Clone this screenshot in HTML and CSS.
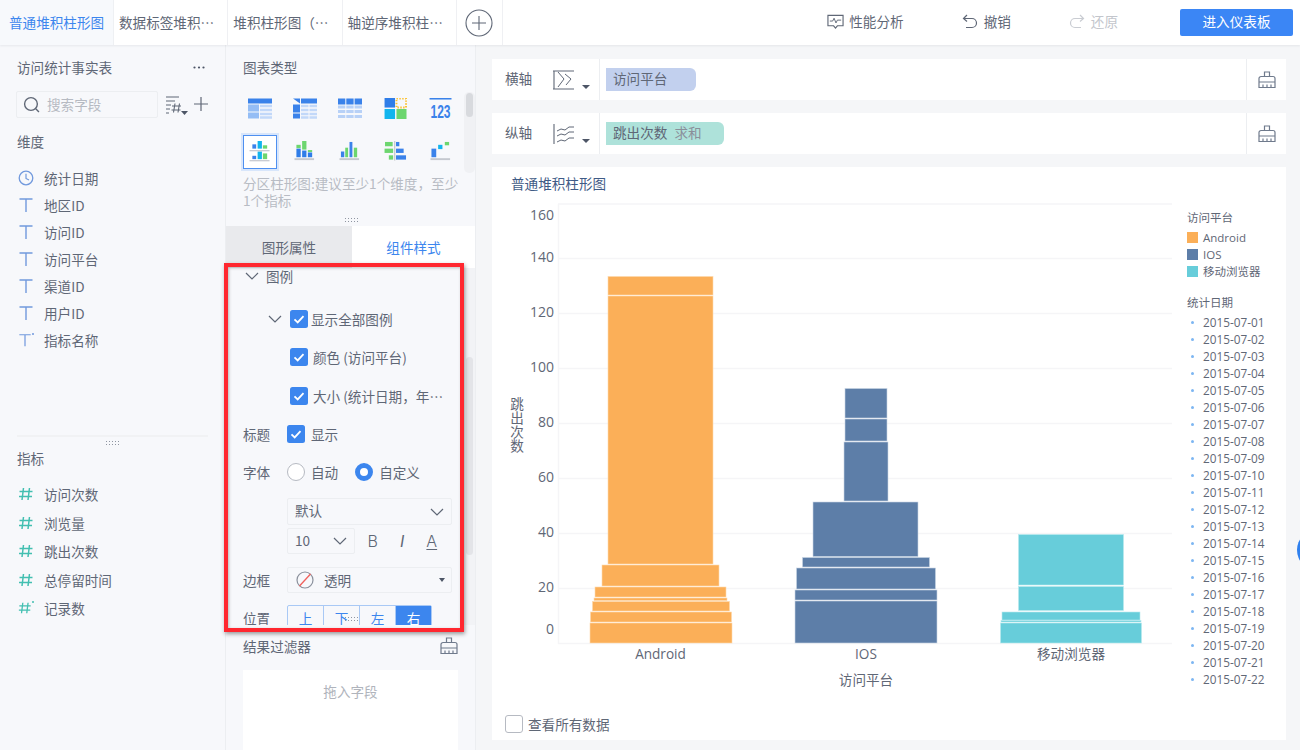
FILE: index.html
```html
<!DOCTYPE html>
<html lang="zh-CN">
<head>
<meta charset="utf-8">
<title>普通堆积柱形图</title>
<link rel="stylesheet" href="styles.css">
</head>
<body>
<svg class="sprite" aria-hidden="true">
  <symbol id="i-brush" viewBox="0 0 18 18"><path d="M6.500 1h5v4.500h-5zM3 5.500h12a2 2 0 0 1 2 2V11H1V7.500a2 2 0 0 1 2-2zM1 11h16v5.500H1zM5 13.500v3M9 13.500v3M13 13.500v3" fill="none" stroke="#6f7a8c" stroke-width="1.200"/></symbol>
  <symbol id="i-check" viewBox="0 0 18 18"><rect width="18" height="18" rx="2.500" fill="#3c86ee"/><path d="M4.500 9.300l3.200 3.100 5.800-6.300" fill="none" stroke="#fff" stroke-width="1.800"/></symbol>
  <symbol id="i-chev" viewBox="0 0 14 8"><path d="M1 1l6 6 6-6" fill="none" stroke="#5f6776" stroke-width="1.200"/></symbol>
  <symbol id="i-t" viewBox="0 0 16 16"><path d="M1.500 2h13M8 2v13" fill="none" stroke="#7199dd" stroke-width="1.400"/></symbol>
  <symbol id="i-hash" viewBox="0 0 16 16"><path d="M5.500 2L4 14M11.500 2L10 14M1.500 5.500h13M1 10.500h13" fill="none" stroke="#43bfb1" stroke-width="1.500"/></symbol>
</svg>

<header class="topbar">
  <nav class="tabs">
    <div class="tab tab-active">普通堆积柱形图</div>
    <div class="tab">数据标签堆积…</div>
    <div class="tab">堆积柱形图（…</div>
    <div class="tab">轴逆序堆积柱…</div>
    <div class="tab-add"><svg class="add-icon" viewBox="0 0 28 28"><circle cx="14" cy="14" r="13" fill="none" stroke="#5f6776" stroke-width="1.100"/><path d="M14 7v14M7 14h14" stroke="#5f6776" stroke-width="1.100"/></svg></div>
  </nav>
  <div class="actions">
    <div class="action action-perf"><svg class="action-icon" viewBox="0 0 18 16"><path d="M1 1h16v11h-6l-2 2.500L7 12H1z" fill="none" stroke="#5f6776" stroke-width="1.200"/><path d="M3 7h3l1.500-3 2 5 1.500-3h4" fill="none" stroke="#5f6776" stroke-width="1"/></svg>性能分析</div>
    <div class="action action-undo"><svg class="action-icon" viewBox="0 0 16 16"><path d="M5 1L1.500 4.500 5 7.500M2 4.500h8a4 4 0 0 1 0 9H4" fill="none" stroke="#5f6776" stroke-width="1.200"/></svg>撤销</div>
    <div class="action action-redo"><svg class="action-icon" viewBox="0 0 16 16"><path d="M11 1l3.500 3.500L11 7.500M14 4.500H6a4 4 0 0 0 0 9h6" fill="none" stroke="#c9ccd2" stroke-width="1.200"/></svg>还原</div>
    <button class="primary">进入仪表板</button>
  </div>
</header>

<main class="workspace">
  <aside class="fields">
    <div class="fields-head"><span>访问统计事实表</span><svg class="more" viewBox="0 0 12 3"><circle cx="1.500" cy="1.500" r="1.100"/><circle cx="6" cy="1.500" r="1.100"/><circle cx="10.500" cy="1.500" r="1.100"/></svg></div>
    <div class="search-row">
      <div class="search">
        <svg class="search-icon" viewBox="0 0 16 16"><circle cx="7.500" cy="7.500" r="6" fill="none" stroke="#5f6776" stroke-width="1.300"/><path d="M12 12l3 3" stroke="#5f6776" stroke-width="1.300"/></svg>
        <span>搜索字段</span>
      </div>
      <svg class="sort-icon" viewBox="0 0 23 20"><path d="M1 2h13M1 6h9M1 10h5M1 14h4M1 18h3" stroke="#5f6776" stroke-width="1.100"/><path d="M10 8.500l-1.500 9M14.500 8.500l-1.500 9M7 11h9M6.500 15h9" stroke="#5f6776" stroke-width="1.100" fill="none"/><path d="M16 16h7l-3.500 4z" fill="#4d5566"/></svg>
      <svg class="plus-icon" viewBox="0 0 14 14"><path d="M7 0v14M0 7h14" stroke="#5f6776" stroke-width="1.200"/></svg>
    </div>
    <h3 class="group-title">维度</h3>
    <ul class="field-list">
      <li><svg class="f-icon" viewBox="0 0 16 16"><circle cx="8" cy="8" r="6.800" fill="none" stroke="#7199dd" stroke-width="1.300"/><path d="M8 3.800V8.500l3 1.500" fill="none" stroke="#7199dd" stroke-width="1.200"/></svg>统计日期</li>
      <li><svg class="f-icon"><use href="#i-t"/></svg>地区ID</li>
      <li><svg class="f-icon"><use href="#i-t"/></svg>访问ID</li>
      <li><svg class="f-icon"><use href="#i-t"/></svg>访问平台</li>
      <li><svg class="f-icon"><use href="#i-t"/></svg>渠道ID</li>
      <li><svg class="f-icon"><use href="#i-t"/></svg>用户ID</li>
      <li><svg class="f-icon" viewBox="0 0 16 16"><use href="#i-t" width="14" height="16"/><circle cx="15" cy="2" r="1" fill="#7199dd"/></svg>指标名称</li>
    </ul>
    <div class="split"><span class="dots"></span></div>
    <h3 class="group-title group-measure">指标</h3>
    <ul class="field-list measure-list">
      <li><svg class="f-icon"><use href="#i-hash"/></svg>访问次数</li>
      <li><svg class="f-icon"><use href="#i-hash"/></svg>浏览量</li>
      <li><svg class="f-icon"><use href="#i-hash"/></svg>跳出次数</li>
      <li><svg class="f-icon"><use href="#i-hash"/></svg>总停留时间</li>
      <li><svg class="f-icon" viewBox="0 0 16 16"><use href="#i-hash" width="14" height="16"/><circle cx="15" cy="2" r="1" fill="#43bfb1"/></svg>记录数</li>
    </ul>
    <span class="dots dots-v"></span>
  </aside>

  <section class="config">
    <div class="types">
      <h3 class="types-title">图表类型</h3>
      <div class="type-grid">
        <div class="type"><svg viewBox="0 0 24 20"><rect width="24" height="5" fill="#3a82ea"/><rect y="6" width="11" height="7" fill="#94bdf5"/><rect y="14" width="11" height="6" fill="#94bdf5"/><path d="M12 7.500h12M12 11.500h12M12 15.500h12M12 19h12" stroke="#c2d8f9" stroke-width="2.500"/></svg></div>
        <div class="type"><svg viewBox="0 0 24 20"><path d="M0 0h7v5z" fill="#3a82ea"/><rect x="8" width="16" height="5" fill="#3a82ea"/><rect y="6" width="7" height="8" fill="#3a82ea"/><rect y="15" width="7" height="5" fill="#3a82ea"/><path d="M8 7.500h7.500M8 11.500h7.500M8 15.500h7.500M8 19h7.500M16.500 7.500H24M16.500 11.500H24M16.500 15.500H24M16.500 19H24" stroke="#c2d8f9" stroke-width="2.500"/></svg></div>
        <div class="type"><svg viewBox="0 0 24 20"><rect width="7.300" height="6" fill="#3a82ea"/><rect x="8.300" width="7.300" height="6" fill="#3a82ea"/><rect x="16.600" width="7.400" height="6" fill="#3a82ea"/><path d="M0 8.500h7.300M8.300 8.500h7.300M16.600 8.500H24M0 13h7.300M8.300 13h7.300M16.600 13H24M0 18h7.300M8.300 18h7.300M16.600 18H24" stroke="#b8d1f7" stroke-width="3"/></svg></div>
        <div class="type"><svg viewBox="0 0 24 22"><rect width="11" height="10" fill="#2f7de8"/><rect x="12.500" y=".5" width="10" height="9.500" fill="none" stroke="#fbc02d" stroke-width="2" stroke-dasharray="1.500 1.500"/><rect y="11.500" width="11" height="10.500" fill="#12b5ee"/><rect x="12.500" y="11.500" width="10.500" height="10.500" fill="#6dd66f"/></svg></div>
        <div class="type type-num"><svg viewBox="0 0 24 22"><rect width="23" height="1.600" fill="#3a82ea"/><text class="num-text" x="11.500" y="20.500" text-anchor="middle" textLength="21" lengthAdjust="spacingAndGlyphs">123</text></svg></div>

        <div class="type type-on"><svg viewBox="0 0 22 22"><g fill="#3a82ea"><rect x="3" y="3.500" width="4" height="4.500"/><rect x="3" y="15.500" width="4" height="3.500"/></g><g fill="#12b5ee"><rect x="8.500" y="0" width="4.500" height="8"/><rect x="8.500" y="11" width="4.500" height="8"/></g><g fill="#6dd66f"><rect x="14" y="4.500" width="4.500" height="3.500"/><rect x="14" y="13" width="4.500" height="6"/></g><rect y="9.500" width="21" height="1.300" fill="#c5c8cf"/><rect y="20" width="21" height="1.300" fill="#c5c8cf"/></svg></div>
        <div class="type"><svg viewBox="0 0 22 22"><rect x="2" y="4" width="4.500" height="3.500" fill="#6dd66f"/><rect x="2" y="8" width="4.500" height="9" fill="#2f7de8"/><rect x="8" y="0" width="4.500" height="9" fill="#6dd66f"/><rect x="8" y="10" width="4.500" height="7" fill="#2f7de8"/><rect x="14" y="9.500" width="4.500" height="2" fill="#6dd66f"/><rect x="14" y="12" width="4.500" height="5" fill="#2f7de8"/><rect y="18" width="20.500" height="2" fill="#c5c8cf"/></svg></div>
        <div class="type"><svg viewBox="0 0 22 22"><rect x="1.500" y="11" width="3.500" height="6" fill="#3a82ea"/><rect x="6" y="7" width="3" height="10" fill="#6dd66f"/><rect x="10.500" y="1" width="3" height="16" fill="#3a82ea"/><rect x="15" y="7" width="3.500" height="10" fill="#6dd66f"/><rect y="18" width="20.500" height="2" fill="#c5c8cf"/></svg></div>
        <div class="type"><svg viewBox="0 0 24 22"><rect x="0.500" y="1" width="8" height="4.500" fill="#6dd66f"/><rect y="8" width="9" height="4.500" fill="#6dd66f"/><rect x="4.500" y="15" width="4.500" height="4.500" fill="#6dd66f"/><rect x="10" y="0" width="1.300" height="20.500" fill="#c5c8cf"/><rect x="12" y="1" width="3.500" height="4.500" fill="#3a82ea"/><rect x="12" y="8" width="8" height="4.500" fill="#3a82ea"/><rect x="12" y="15" width="10.500" height="4.500" fill="#3a82ea"/></svg></div>
        <div class="type"><svg viewBox="0 0 22 22"><rect x="1" y="8" width="5" height="9" fill="#3a82ea"/><rect x="8" y="4" width="4.500" height="4.500" fill="#12b5ee"/><rect x="15" y="1" width="4.500" height="3.500" fill="#6dd66f"/><rect y="18" width="20.500" height="2" fill="#c5c8cf"/></svg></div>
      </div>
      <p class="hint">分区柱形图:建议至少1个维度，至少1个指标</p>
      <div class="scroll-track"><span class="scroll-thumb"></span></div>
      <div class="handle"><span class="dots"></span></div>
    </div>

    <div class="cfg-tabs">
      <div class="cfg-tab cfg-tab-off">图形属性</div>
      <div class="cfg-tab cfg-tab-on">组件样式</div>
    </div>

    <div class="form">
      <div class="row row-head"><svg class="chev"><use href="#i-chev"/></svg>图例</div>
      <div class="row row-sub1"><svg class="chev chev-sub"><use href="#i-chev"/></svg><svg class="cb"><use href="#i-check"/></svg><span class="cb-text-tight">显示全部图例</span></div>
      <div class="row row-sub2"><svg class="cb"><use href="#i-check"/></svg><span class="cb-text">颜色 (访问平台)</span></div>
      <div class="row row-sub3"><svg class="cb"><use href="#i-check"/></svg><span class="cb-text">大小 (统计日期，年…</span></div>
      <div class="row row-gap14"><span class="lbl">标题</span><svg class="cb"><use href="#i-check"/></svg><span class="cb-text-tight">显示</span></div>
      <div class="row row-gap14"><span class="lbl">字体</span><span class="radio"></span><span class="radio-text">自动</span><span class="radio radio-on"></span><span class="radio-text">自定义</span></div>
      <div class="select select-font"><span>默认</span><svg class="chev"><use href="#i-chev"/></svg></div>
      <div class="font-tools">
        <div class="select select-size"><span>10</span><svg class="chev"><use href="#i-chev"/></svg></div>
        <span class="tool tool-b">B</span><span class="tool tool-i">I</span><span class="tool tool-a">A</span>
      </div>
      <div class="row row-border"><span class="lbl">边框</span>
        <div class="select select-border"><svg class="none-icon" viewBox="0 0 18 18"><circle cx="9" cy="9" r="8" fill="none" stroke="#8a909c" stroke-width="1.200"/><path d="M3.500 15L14.500 3" stroke="#f0605c" stroke-width="1.300"/></svg><span>透明</span><i class="caret"></i></div>
      </div>
      <div class="row row-pos"><span class="lbl">位置</span>
        <div class="seg"><span>上</span><span>下</span><span>左</span><span class="seg-on">右</span></div>
      </div>
      <div class="form-track"><span class="form-thumb"></span></div>
      <span class="dots dots-form"></span>
    </div>

    <div class="filter">
      <div class="filter-head"><span>结果过滤器</span><svg class="brush"><use href="#i-brush"/></svg></div>
      <div class="drop">拖入字段</div>
    </div>
  </section>

  <section class="stage">
    <div class="axis-row">
      <span class="axis-label">横轴</span>
      <svg class="axis-icon" viewBox="0 0 23 20"><path d="M1 1h21M1 19h21M2 1v18" fill="none" stroke="#5f6776" stroke-width="1.100"/><path d="M6 2l6 7-6 8M13 4l6 5-5 6" fill="none" stroke="#5f6776" stroke-width="1"/></svg>
      <i class="caret caret-axis"></i>
      <div class="shelf"><span class="pill pill-x">访问平台</span></div>
      <div class="clean"><svg class="brush"><use href="#i-brush"/></svg></div>
    </div>
    <div class="axis-row">
      <span class="axis-label">纵轴</span>
      <svg class="axis-icon" viewBox="0 0 23 20"><path d="M2 0v20" stroke="#5f6776" stroke-width="1.100"/><path d="M5 7l4-2 4 1 4-3 5 0M5 12l4-2 4 1 4-3 5 0M5 18l4-2 4 1 4-3 5 0" fill="none" stroke="#5f6776" stroke-width="1"/></svg>
      <i class="caret caret-axis"></i>
      <div class="shelf"><span class="pill pill-y">跳出次数<em>求和</em></span></div>
      <div class="clean"><svg class="brush"><use href="#i-brush"/></svg></div>
    </div>

    <article class="card">
      <h2 class="card-title">普通堆积柱形图</h2>
      <div class="chart-row">
        <svg class="chart" viewBox="492 199 680 500">
          <g class="grid">
            <path d="M558 204H1172M558 258.500H1172M558 313.500H1172M558 368.500H1172M558 423.500H1172M558 478.500H1172M558 533.500H1172M558 588.500H1172M558 643.500H1172M558.500 204V644"/>
          </g>
          <g class="ticks">
            <text x="554" y="220">160</text><text x="554" y="262">140</text><text x="554" y="317">120</text><text x="554" y="372">100</text><text x="554" y="427">80</text><text x="554" y="482">60</text><text x="554" y="537">40</text><text x="554" y="592">20</text><text x="554" y="634">0</text>
          </g>
          <text class="ytitle" x="517" y="397">跳出次数</text>
          <g class="bar-a">
            <rect x="608" y="276.500" width="105" height="18.500"/><rect x="608" y="296" width="105" height="268"/><rect x="602" y="565" width="117" height="21"/><rect x="595" y="587" width="131" height="10"/><rect x="594" y="598" width="133" height="2.500"/><rect x="592.500" y="601.500" width="137" height="9.500"/><rect x="590.500" y="612" width="141" height="10"/><rect x="590" y="623" width="142" height="20"/>
          </g>
          <g class="bar-b">
            <rect x="845" y="388.500" width="42" height="29.500"/><rect x="845" y="419" width="42" height="22"/><rect x="844" y="442" width="44" height="59"/><rect x="813" y="502" width="105" height="54.500"/><rect x="802.500" y="557.500" width="127" height="9.500"/><rect x="796.500" y="568" width="139" height="21"/><rect x="795" y="590" width="142" height="10"/><rect x="795" y="601" width="142" height="42"/>
          </g>
          <g class="bar-c">
            <rect x="1018.500" y="534.500" width="105" height="50.500"/><rect x="1018.500" y="586.500" width="105" height="24"/><rect x="1002" y="612" width="138" height="8"/><rect x="1001" y="620.500" width="140" height="1.500"/><rect x="1000.500" y="623" width="141" height="20"/>
          </g>
          <g class="xlabels">
            <text x="660.500" y="659">Android</text><text x="866" y="659">IOS</text><text x="1071" y="659">移动浏览器</text><text x="866" y="685">访问平台</text>
          </g>
        </svg>
        <div class="legend">
          <div class="leg-title">访问平台</div>
          <ul class="leg-colors">
            <li><i class="swatch sw-a"></i>Android</li>
            <li><i class="swatch sw-b"></i>IOS</li>
            <li><i class="swatch sw-c"></i>移动浏览器</li>
          </ul>
          <div class="leg-title leg-title-2">统计日期</div>
          <ul class="leg-dates">
            <li>2015-07-01</li><li>2015-07-02</li><li>2015-07-03</li><li>2015-07-04</li><li>2015-07-05</li><li>2015-07-06</li><li>2015-07-07</li><li>2015-07-08</li><li>2015-07-09</li><li>2015-07-10</li><li>2015-07-11</li><li>2015-07-12</li><li>2015-07-13</li><li>2015-07-14</li><li>2015-07-15</li><li>2015-07-16</li><li>2015-07-17</li><li>2015-07-18</li><li>2015-07-19</li><li>2015-07-20</li><li>2015-07-21</li><li>2015-07-22</li>
          </ul>
        </div>
      </div>
      <label class="see-all"><span class="empty-box"></span>查看所有数据</label>
    </article>
  </section>
</main>

<div class="red-box"></div>
<div class="float-ball"></div>
</body>
</html>
```

FILE: styles.css
```css
* { box-sizing: border-box; }
html, body { margin: 0; padding: 0; }
body {
  position: relative;
  width: 1300px;
  height: 750px;
  overflow: hidden;
  background: #f5f6f8;
  color: #5f6776;
  font-family: "Noto Sans CJK SC", "Noto Sans", sans-serif;
  font-size: 13.6px;
  line-height: 1.2;
}
ul { list-style: none; margin: 0; padding: 0; }
h2, h3, p { margin: 0; font-weight: 400; font-size: inherit; }
.sprite { display: none; }

/* top bar */
.topbar {
  height: 45px;
  background: #fff;
  display: flex;
  justify-content: space-between;
  box-shadow: 0 1px 2px rgba(40, 50, 70, .08);
  position: relative;
  z-index: 2;
}
.tabs { display: flex; }
.tab {
  width: 114.300px;
  padding-left: 5px;
  line-height: 44px;
  white-space: nowrap;
  border-right: 1px solid #eff0f3;
}
.tab-active { background: #f7f9fc; color: #3c86ee; padding-left: 9px; width: 114px; border-right-color: #eef0f3; }
.tab-add { width: 46px; display: flex; align-items: center; justify-content: center; border-right: 1px solid #eff0f3; }
.add-icon { width: 28px; height: 28px; }
.actions { display: flex; align-items: center; }
.action { display: flex; align-items: center; gap: 5px; padding-bottom: 2px; }
.action-icon { width: 17px; height: 16px; }
.action-perf { margin-right: 58px; }
.action-undo { margin-right: 58px; }
.action-undo .action-icon, .action-redo .action-icon { width: 16px; }
.action-undo, .action-redo { gap: 6px; }
.action-redo { margin-right: 62px; color: #c3c6cc; }
.primary {
  width: 113px;
  height: 27px;
  margin-right: 7px;
  border: 0;
  border-radius: 2px;
  background: #3b86f5;
  color: #fff;
  font: inherit;
  padding: 0 0 2px;
}

/* layout */
.workspace { display: flex; height: 705px; }

/* left fields */
.fields {
  position: relative;
  width: 226px;
  background: #f7f8fb;
  border-right: 1px solid #eceef1;
  padding-top: 13px;
}
.fields-head { display: flex; justify-content: space-between; align-items: center; padding: 0 20px 0 17px; height: 18px; line-height: 18px; }
.more { width: 12px; height: 3px; fill: #4d5566; }
.search-row { display: flex; align-items: center; margin: 15px 0 0 16px; height: 27px; }
.search {
  width: 142px;
  height: 27px;
  border: 1px solid #eceef1;
  border-radius: 2px;
  display: flex;
  align-items: center;
  padding-left: 6px;
  color: #b6bac2;
}
.search-icon { width: 17px; height: 17px; margin-right: 7px; }
.sort-icon { width: 23px; height: 20px; margin-left: 7px; }
.plus-icon { width: 14px; height: 14px; margin-left: 6px; margin-top: -2px; }
.group-title { margin: 14px 0 0 17px; height: 18px; line-height: 18px; }
.field-list { margin-top: 14.500px; }
.field-list li { height: 27px; display: flex; align-items: center; padding-left: 18px; }
.f-icon { width: 16px; height: 16px; margin-right: 10px; flex: none; }
.split { margin: 81.500px 17px 0; height: 2px; background: #f1f2f4; position: relative; }
.split .dots { position: absolute; left: 88px; top: 5px; }
.group-measure { margin-top: 12px; }
.measure-list { margin-top: 13px; }
.measure-list li { height: 28.500px; }
.dots {
  display: block;
  width: 15px;
  height: 6px;
  background-image: radial-gradient(circle, #8f95a1 .8px, transparent 1px);
  background-size: 3px 3px;
}
.dots-v { position: absolute; right: -2px; top: 347px; width: 3px; height: 15px; }

/* config column */
.config {
  width: 250px;
  background: #f7f8fb;
  border-right: 1px solid #eceef1;
  display: flex;
  flex-direction: column;
}
.types { position: relative; height: 181px; padding-top: 13px; }
.types-title { margin-left: 17px; height: 18px; line-height: 18px; }
.type-grid {
  display: grid;
  grid-template-columns: repeat(5, 45.400px);
  grid-auto-rows: 43px;
  margin: 11px 0 0 11px;
  width: 227px;
}
.type { display: flex; align-items: center; justify-content: center; }
.type svg { width: 24px; height: 21px; display: block; }
.type-num svg { overflow: visible; }
.type-on {
  width: 34px;
  height: 34px;
  justify-self: center;
  align-self: center;
  border: 1.500px solid #4f90f0;
  background: #fff;
  box-shadow: 0 0 0 2px #d8e6fb;
}
.num-text { font-family: "Liberation Sans Narrow", "Liberation Sans", sans-serif; font-size: 20px; font-weight: 700; fill: #3a82ea; }
.hint { margin: 2px 17px 0; color: #b8bcc4; line-height: 17px; width: 217px; }
.scroll-track { position: absolute; left: 238px; top: 47px; width: 11px; height: 81px; background: #f0f1f4; border-radius: 5px; padding: 1px 2px; }
.scroll-thumb { display: block; height: 24px; background: #d8dade; border-radius: 4px; }
.handle { position: absolute; left: 118px; top: 172px; }
.cfg-tabs { display: flex; height: 42px; }
.cfg-tab { display: flex; align-items: center; justify-content: center; padding-top: 1px; }
.cfg-tab-off { width: 126px; background: #e9eaed; }
.cfg-tab-on { flex: 1; background: #fff; color: #3c86ee; }

.form { position: relative; height: 359px; margin-top: -2px; padding: 1px 0 0 17px; overflow: hidden; flex: none; }
.row { display: flex; align-items: center; height: 24px; }
.lbl { width: 44px; flex: none; }
.chev { width: 14px; height: 8px; flex: none; }
.row-head { height: 18px; padding-left: 2px; }
.row-head .chev { margin-right: 7px; }
.row-sub1 { margin-top: 22px; padding-left: 25px; }
.chev-sub { margin-right: 8px; }
.row-sub2 { margin-top: 14px; padding-left: 47px; }
.row-sub3 { margin-top: 15px; padding-left: 47px; }
.row-gap14 { margin-top: 14px; }
.cb { width: 18px; height: 18px; flex: none; }
.cb-text-tight { margin-left: 3px; white-space: nowrap; }
.row-gap14 .cb-text-tight { margin-left: 6px; }
.cb-text { margin-left: 5px; white-space: nowrap; }
.radio { width: 18px; height: 18px; border-radius: 50%; border: 1px solid #b6bac2; background: #fff; flex: none; }
.radio-on { border: 5px solid #3c86ee; margin-left: 17px; }
.radio-text { margin-left: 6px; white-space: nowrap; }
.select {
  height: 26px;
  border: 1px solid #eceef1;
  border-radius: 2px;
  display: flex;
  align-items: center;
  justify-content: space-between;
  padding: 0 7px;
}
.select span { padding-bottom: 2px; }
.select-font { width: 165px; height: 27px; margin: 14px 0 0 44px; }
.font-tools { display: flex; align-items: center; margin: 3px 0 0 44px; height: 26px; }
.select-size { width: 68px; }
.tool { width: 29.500px; text-align: center; font: 300 16px/26px Inter, sans-serif; color: #5f6776; }
.tool-b { margin-left: 3px; }
.tool-i { font-style: italic; font-weight: 400; }
.tool-a { text-decoration: underline; text-underline-offset: 2px; }
.row-border { margin-top: 13px; height: 26px; }
.select-border { width: 165px; padding-left: 8px; justify-content: flex-start; }
.select-border span { padding-bottom: 0; }
.none-icon { width: 18px; height: 18px; margin-right: 10px; }
.caret { width: 0; height: 0; border-left: 3.500px solid transparent; border-right: 3.500px solid transparent; border-top: 4px solid #4d5566; }
.select-border .caret { margin-left: auto; margin-right: -1px; }
.row-pos { margin-top: 12px; height: 26px; align-items: flex-start; }
.row-pos .lbl { line-height: 26px; }
.seg { display: flex; width: 145px; height: 26px; border: 1px solid #a9c9f5; border-radius: 2px; }
.seg span { flex: 1; text-align: center; line-height: 24px; color: #3c86ee; border-right: 1px solid #a9c9f5; }
.seg .seg-on { background: #3c86ee; color: #fff; border-right: 0; }
.form-track { position: absolute; left: 238px; top: 2px; width: 11px; height: 357px; background: #f2f3f6; padding: 89px 2px 0; }
.form-thumb { display: block; height: 198px; background: #e3e4e8; border-radius: 4px; }
.dots-form { position: absolute; left: 118px; top: 350px; }

.filter { padding: 12px 17px 0; }
.filter-head { display: flex; justify-content: space-between; align-items: center; height: 18px; }
.brush { width: 18px; height: 18px; display: block; }
.drop { margin-top: 15px; width: 215px; height: 80px; background: #fff; color: #b0b4bc; text-align: center; padding-top: 13px; }

/* stage */
.stage { flex: 1; padding: 14px 14px 0 16px; background: #f5f6f8; min-width: 0; }
.axis-row { display: flex; align-items: center; height: 41px; margin-bottom: 13px; background: #fff; padding-left: 13px; }
.axis-label { width: 47px; padding-bottom: 2px; }
.axis-icon { width: 23px; height: 20px; }
.caret-axis { margin: 14px 9px 0 7px; border-left-width: 4px; border-right-width: 4px; }
.shelf { flex: 1; height: 41px; border-left: 1px solid #eceef1; padding: 9px 0 0 6px; }
.pill { display: block; height: 23px; line-height: 21px; padding-left: 7px; border-radius: 0 6px 6px 0; }
.pill-x { width: 90px; background: #c2d0ee; }
.pill-y { width: 118px; background: #aee2da; }
.pill em { font-style: normal; color: #8a8f9a; margin-left: 7px; }
.clean { width: 40px; height: 41px; border-left: 1px solid #eceef1; display: flex; align-items: center; justify-content: center; padding-left: 1px; }
.card { background: #fff; height: 573px; margin-top: 1px; }
.card-title { height: 32px; line-height: 32px; padding-left: 19px; color: #3f5b86; }
.chart-row { display: flex; height: 500px; }
.chart { width: 680px; height: 500px; flex: none; display: block; }
.grid path { fill: none; stroke: #f5f5f7; stroke-width: 1.500; }
.ticks text { text-anchor: end; font-size: 14px; fill: #5f6776; font-family: "Open Sans", sans-serif; }
.ytitle { font-size: 13.600px; letter-spacing: .4px; fill: #5f6776; writing-mode: vertical-rl; text-orientation: upright; }
.bar-a rect { fill: #fbaf58; stroke: #fdd9ae; stroke-width: .6; }
.bar-b rect { fill: #5d7ea8; stroke: #c9d5e4; stroke-width: .6; }
.bar-c rect { fill: #67cdda; stroke: #b9e9ef; stroke-width: .6; }
.xlabels text { text-anchor: middle; font-size: 13.600px; fill: #5f6776; font-family: "Open Sans", "Noto Sans CJK SC", sans-serif; }
.legend { margin-left: 15px; padding-top: 10px; font-size: 11.500px; line-height: 17px; }
.legend li { height: 17px; display: flex; align-items: center; font-family: "Open Sans", "Noto Sans CJK SC", sans-serif; white-space: nowrap; }
.leg-title { height: 17px; }
.leg-title-2 { margin-top: 14px; }
.leg-colors { margin-top: 3px; }
.swatch { width: 11px; height: 11px; margin-right: 5px; flex: none; }
.sw-a { background: #fbaf58; }
.sw-b { background: #5d7ea8; }
.sw-c { background: #67cdda; }
.leg-dates { margin-top: 3px; }
.leg-dates li { padding-left: 16px; position: relative; font-size: 11.800px; }
.leg-dates li::before {
  content: "";
  position: absolute;
  left: 4px;
  top: 7px;
  width: 3px;
  height: 3px;
  border-radius: 50%;
  background: #7db6f2;
}
.see-all { display: flex; align-items: center; gap: 5px; padding-left: 13px; margin-top: 16px; height: 18px; }
.empty-box { width: 18px; height: 18px; border: 1px solid #b6bac2; border-radius: 3px; background: #fff; }

/* overlays */
.red-box {
  position: absolute;
  left: 224px;
  top: 263px;
  width: 240px;
  height: 369px;
  border: 4px solid #ff272f;
  box-shadow: 1px 2px 4px rgba(40, 40, 40, .45), inset 1px 1px 3px rgba(40, 40, 40, .3);
  pointer-events: none;
}
.float-ball {
  position: absolute;
  left: 1297px;
  top: 530px;
  width: 40px;
  height: 40px;
  border-radius: 50%;
  background: #2f80ee;
}
```
